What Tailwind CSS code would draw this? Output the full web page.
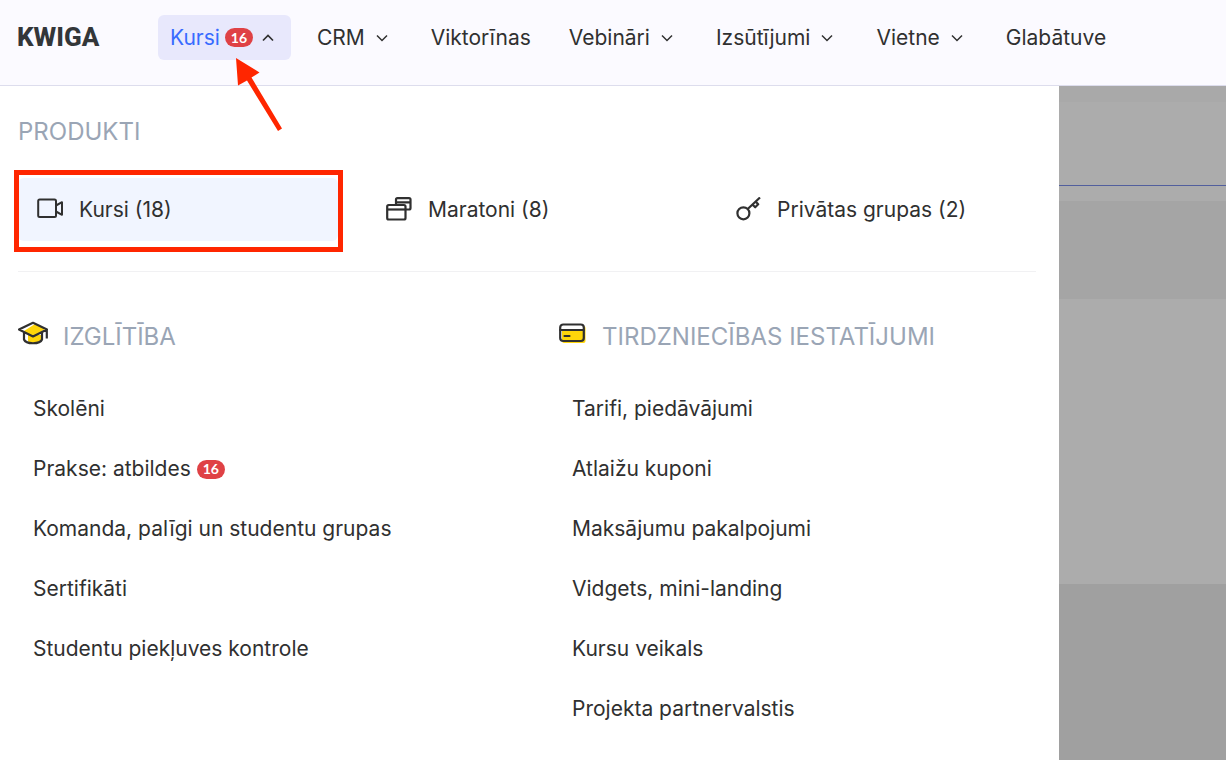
<!DOCTYPE html>
<html lang="lv">
<head>
    <meta charset="UTF-8">
    <meta name="viewport" content="width=device-width, initial-scale=1.0">
    <title>KWIGA</title>
    <script src="https://cdn.jsdelivr.net/npm/@tailwindcss/browser@4"></script>
</head>
<body class="relative flex min-h-screen flex-col bg-white font-['Inter','Liberation_Sans',sans-serif] text-[21px] leading-[30px] text-[#303030]">

    <!-- Top bar -->
    <header class="flex items-start border-b border-[#dddded] bg-[#fbfaff] pt-[15px] pb-[25px] pl-[17px]">
        <a href="#" class="w-[141px] shrink-0 font-['Roboto',sans-serif] text-[26px] leading-[45px] font-extrabold text-[#333639]">KWIGA</a>
        <nav class="flex gap-[14px] whitespace-nowrap">
            <button type="button" aria-expanded="true" class="flex h-[45px] items-center rounded-md bg-[#e8e8fc] px-3 text-[#386bff]">
                Kursi
                <span class="ml-[5px] flex h-[19px] w-7 items-center justify-center rounded-full bg-[#df4145] font-['Lato',sans-serif] text-sm font-bold text-white">16</span>
                <svg class="ml-1 size-[22px] text-[#303030]" viewBox="0 0 22 22" fill="none" stroke="currentColor" stroke-width="1.7"><path d="M6 13.5l5-5 5 5"/></svg>
            </button>
            <button type="button" class="flex h-[45px] items-center gap-[6px] px-3">
                CRM
                <svg class="size-[22px]" viewBox="0 0 22 22" fill="none" stroke="currentColor" stroke-width="1.5"><path d="M6 8.500l5 5 5-5"/></svg>
            </button>
            <a href="#" class="flex h-[45px] items-center px-3">Viktorīnas</a>
            <button type="button" class="flex h-[45px] items-center gap-[6px] px-3">
                Vebināri
                <svg class="size-[22px]" viewBox="0 0 22 22" fill="none" stroke="currentColor" stroke-width="1.5"><path d="M6 8.500l5 5 5-5"/></svg>
            </button>
            <button type="button" class="flex h-[45px] items-center gap-[6px] px-3">
                Izsūtījumi
                <svg class="size-[22px]" viewBox="0 0 22 22" fill="none" stroke="currentColor" stroke-width="1.5"><path d="M6 8.500l5 5 5-5"/></svg>
            </button>
            <button type="button" class="flex h-[45px] items-center gap-[6px] px-3">
                Vietne
                <svg class="size-[22px]" viewBox="0 0 22 22" fill="none" stroke="currentColor" stroke-width="1.5"><path d="M6 8.500l5 5 5-5"/></svg>
            </button>
            <a href="#" class="flex h-[45px] items-center px-3">Glabātuve</a>
        </nav>
    </header>

    <div class="flex flex-1">
        <!-- Dropdown panel -->
        <main class="flex-1 bg-white pt-[31px] pr-[23px] pb-5 pl-[18px]">
            <h2 class="text-2xl leading-[30px] text-[#9aa5b5]">PRODUKTI</h2>
            <div class="mt-[31px] grid grid-cols-3 gap-[29px]">
                <a href="#" class="flex h-[63px] items-center gap-4 rounded-md bg-[#f1f5ff] pl-[19px]">
                    <svg class="size-[26px]" viewBox="0 0 26 26" fill="none" stroke="currentColor" stroke-width="2" stroke-linejoin="round"><rect x="1.2" y="2.5" width="17.8" height="17.5" rx="1.5"/><path d="M19 8.500l6-3.300v12.600l-6-3.300"/></svg>
                    Kursi (18)
                </a>
                <a href="#" class="flex h-[63px] items-center gap-4 rounded-md pl-[19px]">
                    <svg class="size-[26px]" viewBox="0 0 26 26" fill="none" stroke="currentColor" stroke-width="2.200" stroke-linejoin="round"><path d="M10 6.500V1.800Q10 .300 11.500 .300H23Q24.500 .300 24.500 1.800V10.200Q24.500 11.700 23 11.700H19.500M10 4.500H24.500" transform="translate(0 .8)"/><rect x="1.200" y="8" width="18.300" height="14.500" rx="1.500"/><path d="M1.200 12.500h18"/></svg>
                    Maratoni (8)
                </a>
                <a href="#" class="flex h-[63px] items-center gap-4 rounded-md pl-[19px]">
                    <svg class="size-[26px]" viewBox="0 0 26 26" fill="none" stroke="currentColor" stroke-width="2.200" stroke-linejoin="round"><circle cx="8.400" cy="16.300" r="6"/><path d="M12.700 12L25 .500M17.500 7.500l2.700 2.800 3-3-2.600-2.700"/></svg>
                    Privātas grupas (2)
                </a>
            </div>

            <div class="mt-[30px] grid grid-cols-2 gap-[60px] border-t border-[#f1f1f3] pt-[49px]">
                <section>
                    <h2 class="flex items-center gap-[15px] text-2xl leading-[30px] text-[#9aa5b5]">
                        <svg class="mb-2 h-6 w-[30px] shrink-0" viewBox="0 0 30 24" fill="none"><path d="M17 3l10 5-9 6 6 0v5q-4 3-8 3-5 0-6-2v-7l-4-3z" fill="#ffd60a"/><path d="M1 8.500L15 1.800l14 6.700-14 7zM6 11.500v7c2 5 16 5 18 0v-7M28.800 8.500v9" stroke="#303030" stroke-width="2.200" stroke-linejoin="round"/></svg>
                        IZGLĪTĪBA
                    </h2>
                    <ul class="mt-[26px] pl-[15px]">
                        <li><a href="#" class="flex h-[60px] items-center">Skolēni</a></li>
                        <li>
                            <a href="#" class="flex h-[60px] items-center gap-[6px]">
                                Prakse: atbildes
                                <span class="flex h-[19px] w-7 items-center justify-center rounded-full bg-[#df4145] font-['Lato',sans-serif] text-sm font-bold text-white">16</span>
                            </a>
                        </li>
                        <li><a href="#" class="flex h-[60px] items-center">Komanda, palīgi un studentu grupas</a></li>
                        <li><a href="#" class="flex h-[60px] items-center">Sertifikāti</a></li>
                        <li><a href="#" class="flex h-[60px] items-center">Studentu piekļuves kontrole</a></li>
                    </ul>
                </section>
                <section>
                    <h2 class="flex items-center gap-[15px] text-2xl leading-[30px] text-[#9aa5b5]">
                        <svg class="mb-2 h-6 w-[30px] shrink-0" viewBox="0 0 30 24" fill="none"><rect x="5" y="5" width="23.500" height="17" rx="2" fill="#ffd60a"/><rect x="4" y="4" width="22" height="4" fill="#fff"/><rect x="3.200" y="3.500" width="23.600" height="16.500" rx="3" stroke="#303030" stroke-width="2.200"/><path d="M3.200 9h23.600M7.500 15h5" stroke="#303030" stroke-width="2.200" stroke-linecap="round"/></svg>
                        TIRDZNIECĪBAS IESTATĪJUMI
                    </h2>
                    <ul class="mt-[26px] pl-[15px]">
                        <li><a href="#" class="flex h-[60px] items-center">Tarifi, piedāvājumi</a></li>
                        <li><a href="#" class="flex h-[60px] items-center">Atlaižu kuponi</a></li>
                        <li><a href="#" class="flex h-[60px] items-center">Maksājumu pakalpojumi</a></li>
                        <li><a href="#" class="flex h-[60px] items-center">Vidgets, mini-landing</a></li>
                        <li><a href="#" class="flex h-[60px] items-center">Kursu veikals</a></li>
                        <li><a href="#" class="flex h-[60px] items-center">Projekta partnervalstis</a></li>
                    </ul>
                </section>
            </div>
        </main>

        <!-- Dimmed page behind the menu -->
        <aside class="flex w-[167px] shrink-0 flex-col bg-[#acacac]">
            <div class="h-4 bg-[#a9a9a9]"></div>
            <div class="h-[84px] border-b border-[#525f9d]"></div>
            <div class="mt-[15px] h-[98px] bg-[#a5a5a5]"></div>
            <div class="mt-[285px] flex-1 bg-[#a0a0a0]"></div>
        </aside>
    </div>

    <!-- Highlight frame and arrow -->
    <div class="pointer-events-none absolute top-[170px] left-[14px] h-[82px] w-[329px] border-[5px] border-[#ff2600]"></div>
    <svg class="pointer-events-none absolute top-[58px] left-[235px] h-[74px] w-[50px]" viewBox="0 0 50 74" fill="#ff2600"><path d="M1 0l23.500 14.500-8 5L47 70.500l-4 2.500L12 22.500l-9 5z"/></svg>
</body>
</html>
